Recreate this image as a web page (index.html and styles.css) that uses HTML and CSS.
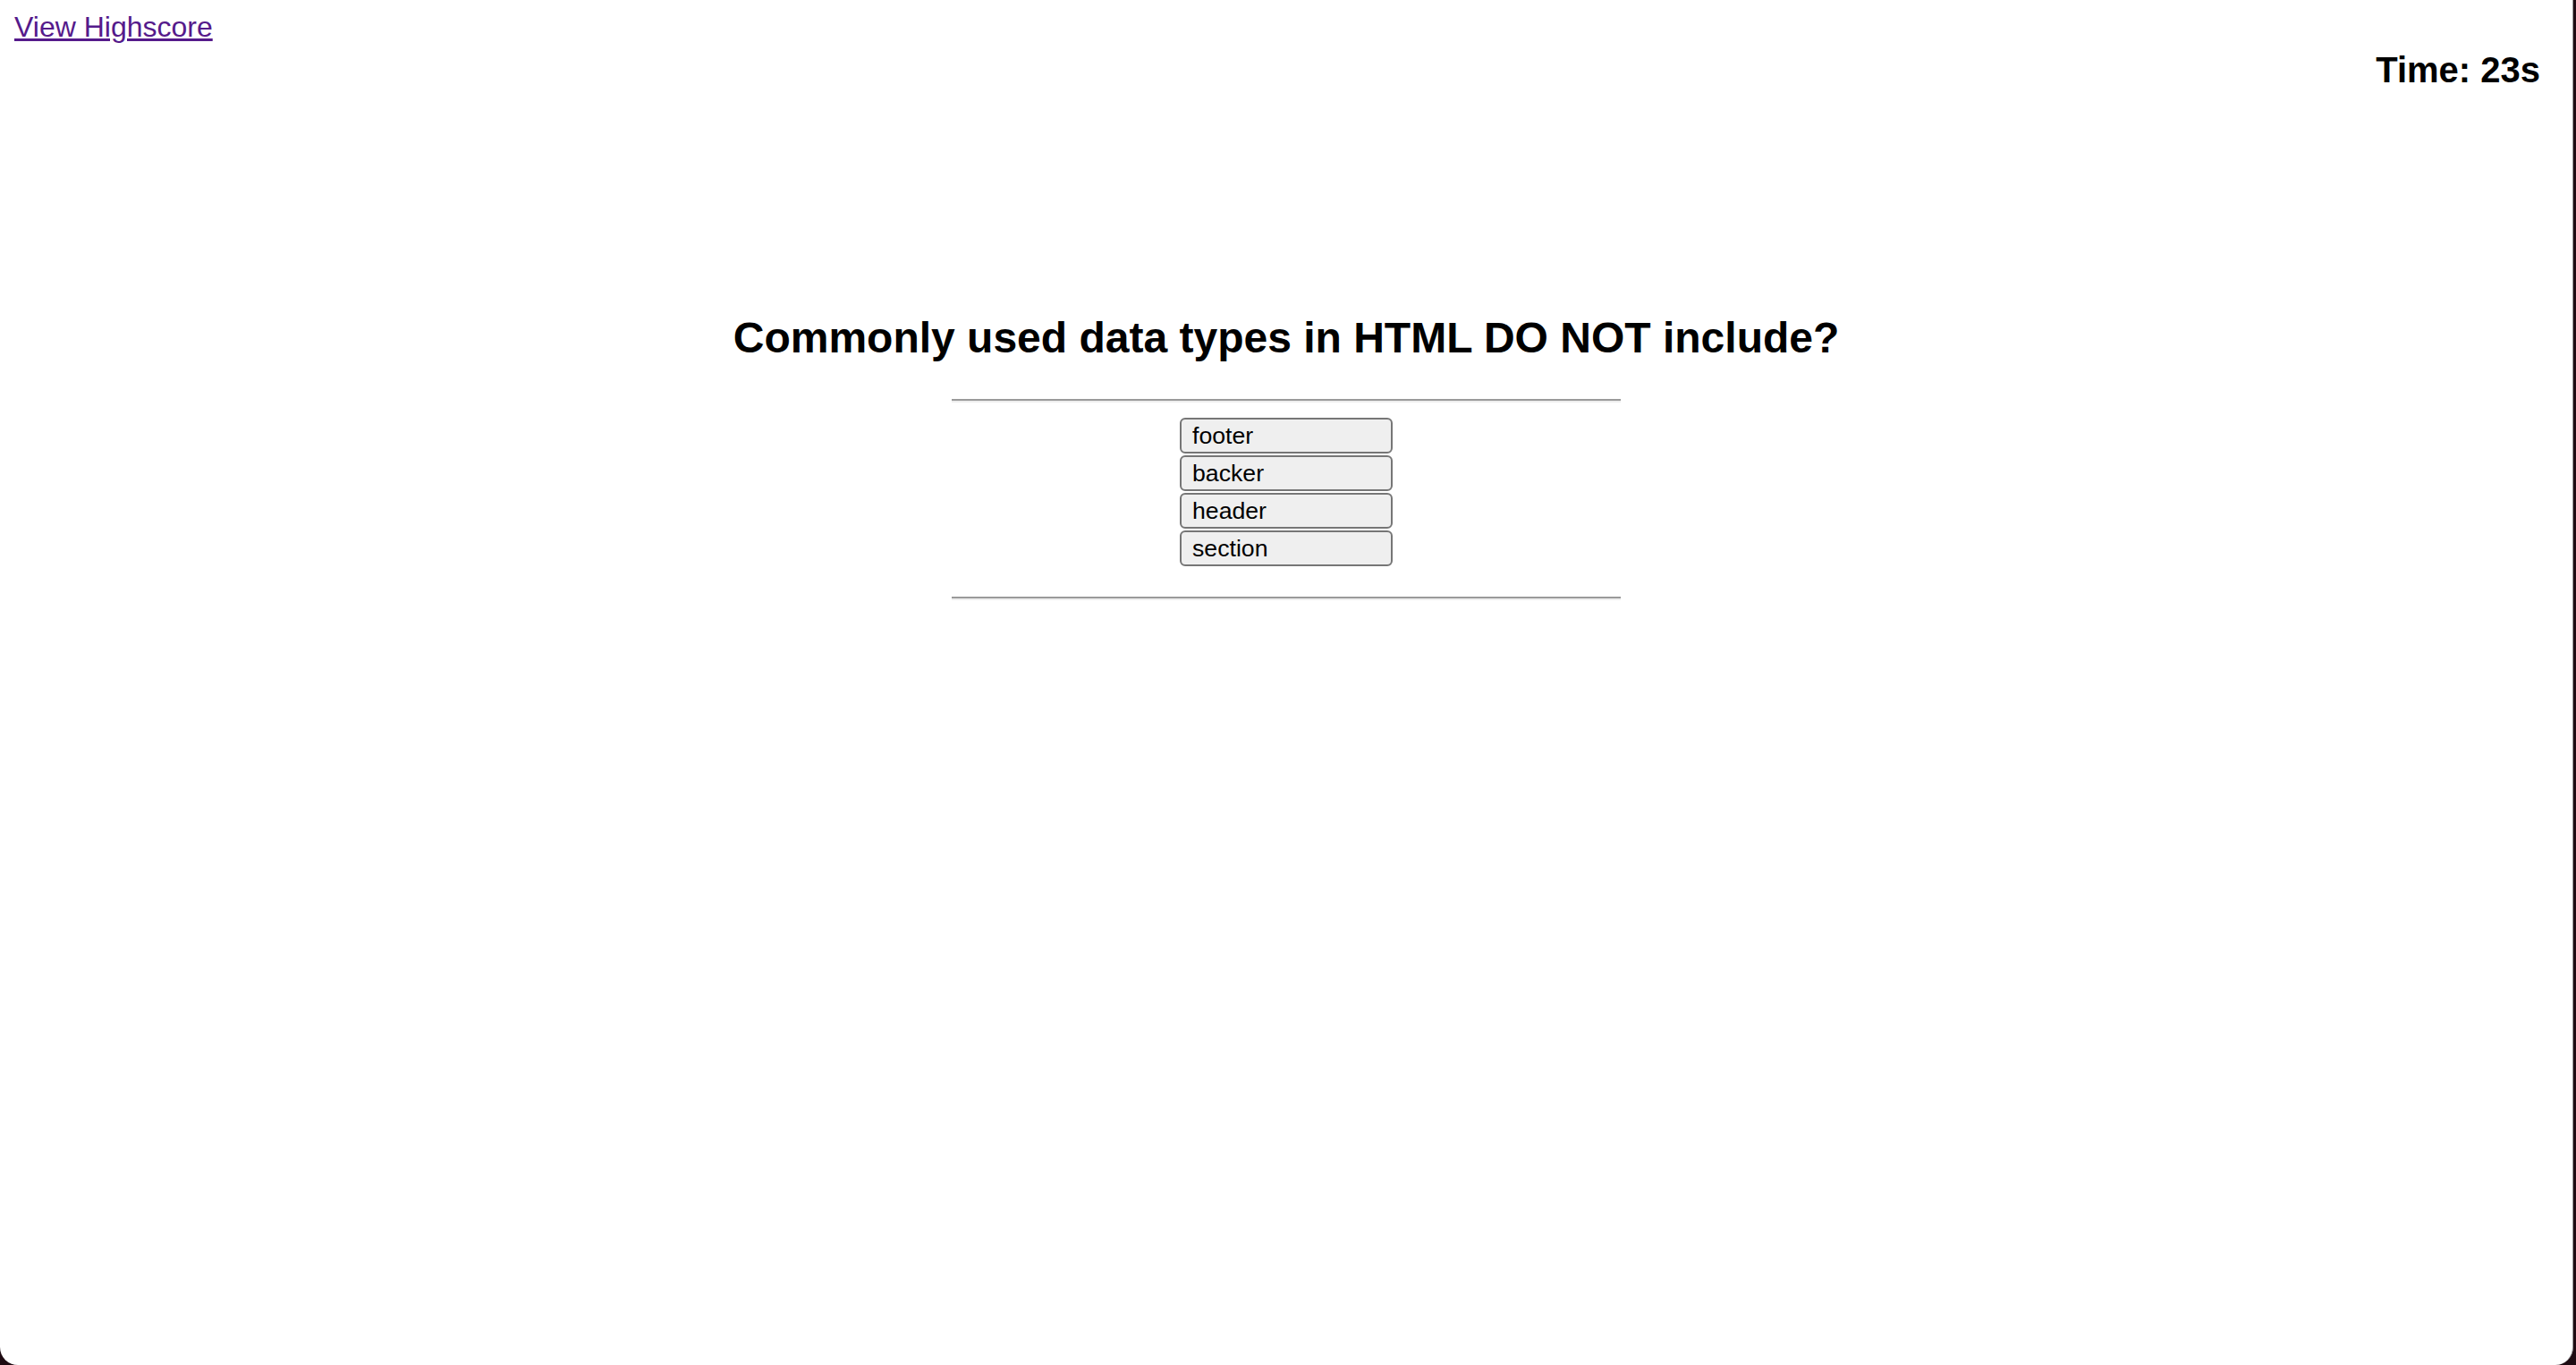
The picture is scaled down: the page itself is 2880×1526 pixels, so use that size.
FILE: index.html
```html
<!DOCTYPE html>
<html lang="en">
<head>
  <meta charset="UTF-8" />
  <meta name="viewport" content="width=device-width, initial-scale=1.0" />
  <title>Code Quiz</title>
  <link rel="stylesheet" href="styles.css">
</head>
<body>
  <header class="topbar">
    <a href="#" class="highscore-link">View Highscore</a>
    <p class="timer">Time: <span id="time">23</span>s</p>
  </header>

  <main class="quiz">
    <h2 class="question">Commonly used data types in HTML DO NOT include?</h2>
    <hr class="divider">
    <div class="choices">
      <button class="choice">footer</button>
      <button class="choice">backer</button>
      <button class="choice">header</button>
      <button class="choice">section</button>
    </div>
    <hr class="divider">
  </main>
</body>
</html>
```

FILE: styles.css
```css
html { background: #1e0b12; }
body {
  margin: 0 3px 0 0; min-height: 100vh; box-sizing: border-box;
  background: #fff; color: #000;
  font-family: "Liberation Sans", Arial, sans-serif;
  border-right: 1px solid #9b9b9b; border-radius: 0 0 20px 20px;
}
.topbar {
  display: flex; justify-content: space-between; align-items: flex-start;
  padding: 12px 36px 0 16px; height: 100px; box-sizing: border-box;
}
.highscore-link {
  font-size: 32px; line-height: 36px; color: #551a8b;
}
.timer {
  margin: 42px 0 0; font-size: 40px; line-height: 48px; font-weight: bold;
}
.quiz { text-align: center; padding-top: 250px; }
.question {
  margin: 0 0 40px; font-size: 48px; line-height: 56px; font-weight: bold;
}
.divider {
  width: 748px; height: 0; margin: 0 auto 17px;
  border: none; border-top: 2px solid #9a9a9a; border-bottom: 2px solid #eee;
}
.choices {
  display: flex; flex-direction: column; align-items: center; gap: 2px;
  margin-bottom: 34px;
}
.choice {
  width: 238px; height: 40px; padding: 0 12px; box-sizing: border-box;
  text-align: left; font-family: "Liberation Sans", Arial, sans-serif;
  font-size: 26.67px; color: #000; background: #efefef;
  border: 2px solid #767676; border-radius: 6px; cursor: pointer;
}
```
